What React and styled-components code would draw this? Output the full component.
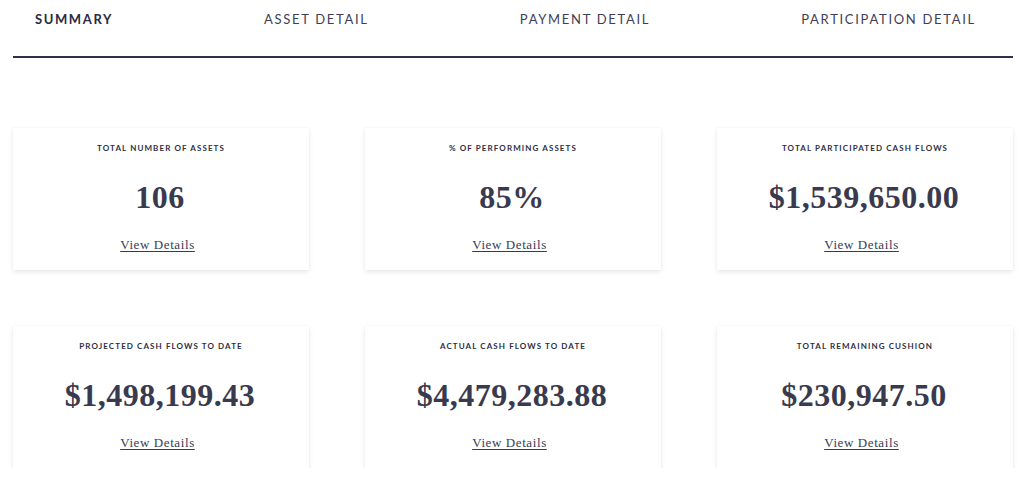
import React from "react";
import styled, { createGlobalStyle } from "styled-components";

const GlobalStyle = createGlobalStyle`
  body {
    margin: 0;
    background: #ffffff;
    font-family: Lato, "Liberation Sans", sans-serif;
    color: #33334b;
  }
`;

const Page = styled.div`
  padding: 0 11px 0 13px;
`;

const Tabs = styled.nav`
  display: flex;
  justify-content: space-between;
  align-items: center;
  height: 38px;
  padding: 0 37px 18px 22px;
  border-bottom: 2px solid #30304d;
`;

const Tab = styled.a`
  font-size: 13px;
  letter-spacing: ${(p) => (p.active ? "1.6px" : "1.7px")};
  text-transform: uppercase;
  color: ${(p) => (p.active ? "#2a2a44" : "#3e3e55")};
  font-weight: ${(p) => (p.active ? 700 : 400)};
  cursor: pointer;
`;

const Grid = styled.div`
  display: grid;
  grid-template-columns: repeat(3, 1fr);
  column-gap: 56px;
  row-gap: 56px;
  margin-top: 70px;
`;

const Card = styled.div`
  height: 142px;
  background: #fff;
  box-shadow: 0 2px 5px rgba(0, 0, 0, 0.09), 0 0 2px rgba(0, 0, 0, 0.04);
  display: flex;
  flex-direction: column;
  align-items: center;
  padding-top: 15px;
  box-sizing: border-box;
`;

const Label = styled.div`
  font-family: Lato, "Liberation Sans", sans-serif;
  font-size: 8px;
  font-weight: 700;
  letter-spacing: 1.1px;
  text-transform: uppercase;
  color: #2e2e45;
`;

const Value = styled.div`
  font-family: "Liberation Serif", serif;
  font-weight: 700;
  font-size: 32px;
  letter-spacing: 0.5px;
  color: #393a4e;
  margin-top: 26px;
  margin-right: 2px;
  line-height: 36px;
`;

const Link = styled.a`
  font-family: "Liberation Serif", serif;
  font-size: 13px;
  letter-spacing: 0.6px;
  color: #3a3a4f;
  text-decoration: underline;
  text-underline-offset: 2px;
  margin-top: 22px;
  margin-right: 7px;
  cursor: pointer;
`;

const tabs = ["Summary", "Asset Detail", "Payment Detail", "Participation Detail"];

const stats = [
  { label: "Total Number of Assets", value: "106" },
  { label: "% of Performing Assets", value: "85%" },
  { label: "Total Participated Cash Flows", value: "$1,539,650.00" },
  { label: "Projected Cash Flows to Date", value: "$1,498,199.43" },
  { label: "Actual Cash Flows to Date", value: "$4,479,283.88" },
  { label: "Total Remaining Cushion", value: "$230,947.50" },
];

export default function App() {
  return (
    <Page>
      <GlobalStyle />
      <Tabs>
        {tabs.map((t, i) => (
          <Tab key={t} active={i === 0}>
            {t}
          </Tab>
        ))}
      </Tabs>
      <Grid>
        {stats.map((s) => (
          <Card key={s.label}>
            <Label>{s.label}</Label>
            <Value>{s.value}</Value>
            <Link>View Details</Link>
          </Card>
        ))}
      </Grid>
    </Page>
  );
}
